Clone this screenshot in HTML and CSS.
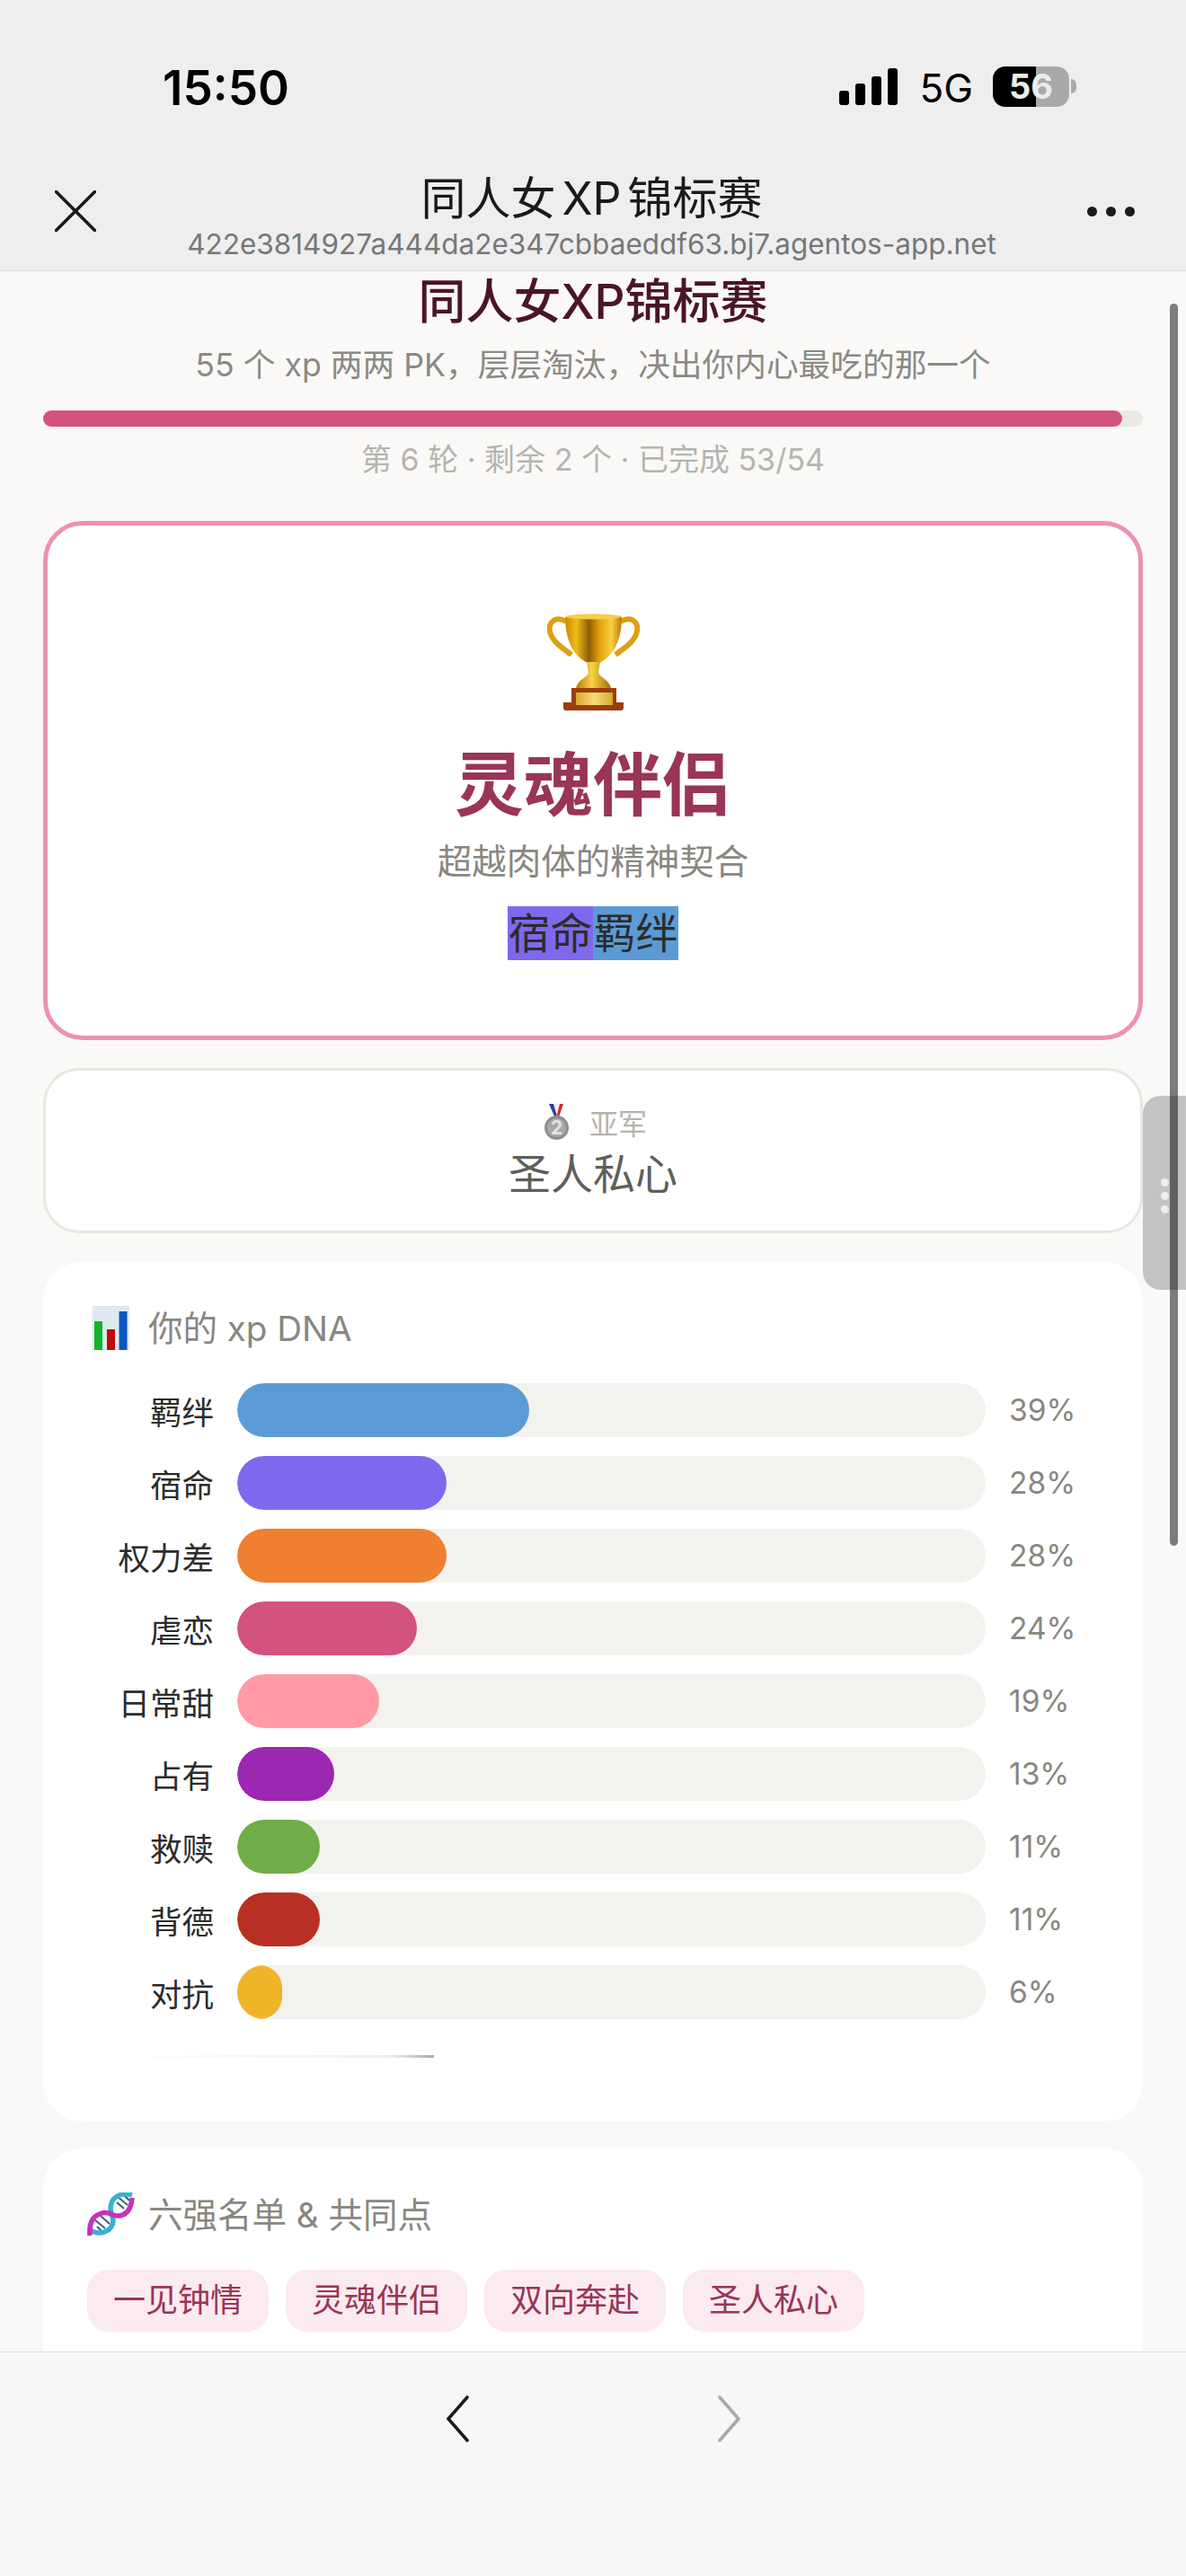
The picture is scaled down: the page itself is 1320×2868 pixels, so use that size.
FILE: index.html
```html
<!DOCTYPE html>
<html lang="zh-CN">
<head>
    <meta charset="UTF-8">
    <meta name="viewport" content="width=device-width, initial-scale=1.0">
    <title>同人女 XP 锦标赛</title>
    <link rel="stylesheet" href="styles.css">
</head>
<body>
    <div class="phone">
        <header class="topbar">
            <div class="status">
                <span class="time">15:50</span>
                <div class="status-right">
                    <div class="signal"><i class="s1"></i><i class="s2"></i><i class="s3"></i><i class="s4"></i></div>
                    <span class="net">5G</span>
                    <div class="battery"><span>56</span></div>
                    <div class="battery-tip"></div>
                </div>
            </div>
            <div class="webbar">
                <svg class="close-icon" viewBox="0 0 46 46"><path d="M1.5 1.5 44.5 44.5M44.5 1.500 1.500 44.500" stroke="#1a1a1a" stroke-width="3.600" stroke-linecap="round" fill="none"/></svg>
                <div class="webtitle">
                    <div class="webname">同人女 XP 锦标赛</div>
                    <div class="weburl">422e3814927a444da2e347cbbaeddf63.bj7.agentos-app.net</div>
                </div>
                <div class="more"><i></i><i></i><i></i></div>
            </div>
        </header>

        <main class="content">
            <h1>同人女XP锦标赛</h1>
            <p class="intro">55 个 xp 两两 PK，层层淘汰，决出你内心最吃的那一个</p>
            <div class="progress"><div class="progress-fill"></div></div>
            <p class="round">第 6 轮 · 剩余 2 个 · 已完成 53/54</p>

            <section class="champion">
                <svg class="trophy" viewBox="0 0 103 108">
                    <defs>
                        <linearGradient id="cup" x1="0" x2="1" y1="0" y2="0">
                            <stop offset="0" stop-color="#c98a08"/>
                            <stop offset=".2" stop-color="#f0bd18"/>
                            <stop offset=".42" stop-color="#8f5e08"/>
                            <stop offset=".6" stop-color="#e0a00c"/>
                            <stop offset=".82" stop-color="#f8d040"/>
                            <stop offset="1" stop-color="#b87a08"/>
                        </linearGradient>
                        <linearGradient id="foot" x1="0" x2="1" y1="0" y2="0">
                            <stop offset="0" stop-color="#b87a08"/>
                            <stop offset=".45" stop-color="#f8d448"/>
                            <stop offset="1" stop-color="#a86c08"/>
                        </linearGradient>
                        <linearGradient id="plate" x1="0" x2="1" y1="0" y2="0">
                            <stop offset="0" stop-color="#d9a82e"/>
                            <stop offset=".5" stop-color="#f7dc7c"/>
                            <stop offset="1" stop-color="#d9a82e"/>
                        </linearGradient>
                    </defs>
                    <path d="M21 9C9 2 1 10 3 20 5 31 18 39 27 46M82 9C94 2 102 10 100 20 98 31 85 39 76 46" fill="none" stroke="#dca014" stroke-width="6"/>
                    <path d="M20 4C30 0 73 0 83 4 83 29 74 48 58 55H45C29 48 20 29 20 4Z" fill="url(#cup)"/>
                    <ellipse cx="51.500" cy="3.500" rx="31" ry="3" fill="#f6cf48"/>
                    <path d="M44 54H59L57 66C59 72 70 74 71 84H32C33 74 44 72 46 66Z" fill="url(#foot)"/>
                    <path d="M27 83H77V99H85V105Q85 108 82 108H21Q18 108 18 105V99H27Z" fill="#9c3d0c"/>
                    <rect x="32" y="88" width="41" height="14" fill="url(#plate)"/>
                </svg>
                <div class="champ-name">灵魂伴侣</div>
                <div class="champ-desc">超越肉体的精神契合</div>
                <div class="champ-tags"><span class="tag-purple">宿命</span><span class="tag-blue">羁绊</span></div>
            </section>

            <section class="runner">
                <div class="runner-label">
                    <svg class="medal" viewBox="0 0 29 40">
                        <path d="M6 0H22L16.500 16H12.500Z" fill="#eee"/>
                        <path d="M6 0H11L15 14 13 16Z" fill="#2f3f9e"/>
                        <path d="M22 0H18L15 12 16.500 16Z" fill="#c92b36"/>
                        <circle cx="14.500" cy="26.500" r="13.500" fill="#8e8e90"/>
                        <circle cx="14.500" cy="26.500" r="10.500" fill="#a9a9ab"/>
                        <text x="14.500" y="34" text-anchor="middle" class="medal-num">2</text>
                    </svg>
                    <span>亚军</span>
                </div>
                <div class="runner-name">圣人私心</div>
            </section>

            <section class="card dna-card">
                <div class="card-head">
                    <svg class="head-icon" viewBox="0 0 54 49">
                        <defs>
                            <pattern id="grid" width="3" height="3" patternUnits="userSpaceOnUse">
                                <path d="M3 0H0V3" fill="none" stroke="#c6d6e6" stroke-width=".6"/>
                            </pattern>
                        </defs>
                        <rect x="6" y="0" width="41" height="49" fill="#e4edf5"/>
                        <rect x="6" y="0" width="41" height="49" fill="url(#grid)"/>
                        <rect x="8" y="17" width="9" height="32" fill="#0fb52a"/>
                        <rect x="22" y="26" width="9" height="23" fill="#c00b0b"/>
                        <rect x="35.500" y="6" width="9" height="43" fill="#0c57c0"/>
                    </svg>
                    <span>你的 xp DNA</span>
                </div>
                <div class="bars">
                    <div class="bar-label">羁绊</div><div class="track"><div class="fill" style="width:39%;background:#5b9bd5"></div></div><div class="pct">39%</div>
                    <div class="bar-label">宿命</div><div class="track"><div class="fill" style="width:28%;background:#7f68ed"></div></div><div class="pct">28%</div>
                    <div class="bar-label">权力差</div><div class="track"><div class="fill" style="width:28%;background:#f07f30"></div></div><div class="pct">28%</div>
                    <div class="bar-label">虐恋</div><div class="track"><div class="fill" style="width:24%;background:#d4527e"></div></div><div class="pct">24%</div>
                    <div class="bar-label">日常甜</div><div class="track"><div class="fill" style="width:19%;background:#ff9aa6"></div></div><div class="pct">19%</div>
                    <div class="bar-label">占有</div><div class="track"><div class="fill" style="width:13%;background:#9c27b0"></div></div><div class="pct">13%</div>
                    <div class="bar-label">救赎</div><div class="track"><div class="fill" style="width:11%;background:#70ad47"></div></div><div class="pct">11%</div>
                    <div class="bar-label">背德</div><div class="track"><div class="fill" style="width:11%;background:#b83024"></div></div><div class="pct">11%</div>
                    <div class="bar-label">对抗</div><div class="track"><div class="fill" style="width:6%;background:#f0b429"></div></div><div class="pct">6%</div>
                </div>
                <div class="fade-line"></div>
            </section>

            <section class="card list-card">
                <div class="card-head">
                    <svg class="head-icon" viewBox="0 0 54 49">
                        <path d="M11 38 17 44M8 30 20 40M15 26 25 35M33 11 41 18M33 4 45 14M41 3 47 9" stroke="#46607e" stroke-width="2.200"/>
                        <path d="M50 3C40 0 30 3 27 12 25 18 26 22 28 27 31 35 26 44 14 45 10 45 6 44 3 41" fill="none" stroke="#35b3cf" stroke-width="5.500"/>
                        <path d="M3 48C2 36 5 27 14 24 20 21 25 23 29 25 37 28 44 24 47 18 49 14 50 10 50 6" fill="none" stroke="#c433bd" stroke-width="5.500"/>
                    </svg>
                    <span>六强名单 &amp; 共同点</span>
                </div>
                <div class="chips">
                    <span class="chip">一见钟情</span>
                    <span class="chip">灵魂伴侣</span>
                    <span class="chip">双向奔赴</span>
                    <span class="chip">圣人私心</span>
                </div>
            </section>
        </main>

        <footer class="bottombar">
            <svg class="chev" viewBox="0 0 26 52"><path d="M24 2 3 26 24 50" fill="none" stroke="#1a1a1a" stroke-width="3.600" stroke-linecap="round" stroke-linejoin="round"/></svg>
            <svg class="chev" viewBox="0 0 26 52"><path d="M2 2 23 26 2 50" fill="none" stroke="#a9a9a9" stroke-width="3.600" stroke-linecap="round" stroke-linejoin="round"/></svg>
        </footer>

        <div class="side-handle"><i></i><i></i><i></i></div>
        <div class="scrollbar"></div>
    </div>
</body>
</html>
```

FILE: styles.css
```css
* {
    box-sizing: border-box;
}
body {
    margin: 0;
    background-color: #faf9f7;
    font-family: Inter, "Noto Sans CJK SC", sans-serif;
}
.phone {
    position: relative;
    width: 1320px;
    height: 2868px;
    display: flex;
    flex-direction: column;
    overflow: hidden;
}

/* top bar */
.topbar {
    height: 302px;
    flex-shrink: 0;
    background-color: #eeeeef;
    border-bottom: 1px solid #dedede;
}
.status {
    height: 190px;
    padding: 68px 122px 0 181px;
    display: flex;
    justify-content: space-between;
}
.time {
    font-size: 53px;
    line-height: 60px;
    font-weight: 600;
    color: #000;
}
.status-right {
    height: 46px;
    margin-top: 5px;
    display: flex;
    align-items: center;
}
.signal {
    display: flex;
    align-items: flex-end;
    gap: 7px;
    height: 41px;
    margin-right: 24px;
}
.signal i {
    width: 11px;
    border-radius: 3px;
    background-color: #000;
}
.s1 { height: 16px; }
.s2 { height: 24px; }
.s3 { height: 32px; }
.s4 { height: 41px; }
.net {
    font-size: 44px;
    line-height: 46px;
    color: #000;
    margin: 3px 22px 0 0;
}
.battery {
    width: 85px;
    height: 45px;
    border-radius: 14px;
    background: linear-gradient(to right, #000 48px, #a9a9a9 48px);
    color: #ececec;
    font-size: 38px;
    font-weight: 700;
    line-height: 45px;
    text-align: center;
}
.battery-tip {
    width: 6px;
    height: 16px;
    margin-left: 2px;
    border-radius: 0 8px 8px 0;
    background-color: #a9a9a9;
}
.webbar {
    height: 111px;
    padding: 0 57px 0 61px;
    display: flex;
    justify-content: space-between;
}
.close-icon {
    width: 46px;
    height: 46px;
    margin-top: 22px;
}
.webtitle {
    text-align: center;
    margin-top: -2px;
}
.webname {
    font-size: 50px;
    line-height: 66px;
    word-spacing: -7px;
    color: #1a1a1a;
}
.weburl {
    font-size: 31.500px;
    line-height: 36px;
    color: #777;
}
.more {
    display: flex;
    gap: 10px;
    margin-top: 40px;
}
.more i {
    width: 11px;
    height: 11px;
    border-radius: 50%;
    background-color: #1a1a1a;
}

/* scroll content */
.content {
    flex: 1;
    min-height: 0;
    overflow: hidden;
    padding: 0 48px;
    background-color: #faf9f7;
}
h1 {
    margin: 0;
    font-size: 53px;
    line-height: 68px;
    font-weight: 500;
    color: #4a1528;
    text-align: center;
}
.intro {
    margin: 12px 0 0;
    font-size: 35.700px;
    line-height: 48px;
    color: #8a8a85;
    text-align: center;
}
.progress {
    height: 18px;
    margin-top: 27px;
    border-radius: 9px;
    background-color: #ebe9e5;
}
.progress-fill {
    width: 98.100%;
    height: 100%;
    border-radius: 9px;
    background-color: #d4527e;
}
.round {
    margin: 15px 0 0;
    font-size: 34px;
    line-height: 44px;
    color: #b5b5b0;
    text-align: center;
}

/* champion */
.champion {
    height: 578px;
    margin-top: 46px;
    padding-top: 98px;
    border: 5px solid #ee90b4;
    border-radius: 44px;
    background-color: #fff;
    text-align: center;
}
.trophy {
    display: block;
    width: 103px;
    height: 108px;
    margin: 0 auto;
}
.champ-name {
    margin-top: 33px;
    font-size: 77px;
    line-height: 100px;
    font-weight: 700;
    color: #993556;
}
.champ-desc {
    margin-top: 9px;
    font-size: 38.500px;
    line-height: 52px;
    color: #888780;
}
.champ-tags {
    display: flex;
    justify-content: center;
    margin-top: 24px;
}
.champ-tags span {
    width: 95px;
    height: 60px;
    font-size: 47px;
    line-height: 60px;
    color: #2c2c2a;
}
.tag-purple { background-color: #7f68ed; }
.tag-blue { background-color: #5b9bd5; }

/* runner up */
.runner {
    height: 184px;
    margin-top: 31px;
    padding-top: 37px;
    border: 3px solid #e8e6e0;
    border-radius: 40px;
    background-color: #fff;
    text-align: center;
}
.runner-label {
    display: flex;
    justify-content: center;
    align-items: center;
    gap: 22px;
    height: 40px;
    padding-left: 5px;
    font-size: 32px;
    color: #b4b4ae;
}
.medal {
    width: 29px;
    height: 40px;
}
.medal-num {
    font-size: 21px;
    font-weight: 700;
    fill: #e4e4e4;
}
.runner-name {
    margin-top: 8px;
    font-size: 47px;
    line-height: 60px;
    color: #5f5f5a;
}

/* white cards */
.card {
    margin-top: 30px;
    padding: 49px 49px 0;
    border-radius: 44px;
    background-color: #fff;
}
.dna-card {
    margin-top: 32px;
    padding-bottom: 71px;
}
.list-card {
    padding-bottom: 60px;
}
.card-head {
    display: flex;
    align-items: center;
    gap: 14px;
    height: 49px;
    font-size: 38.500px;
    color: #888780;
}
.card-head span {
    padding-bottom: 5px;
}
.head-icon {
    width: 54px;
    height: 49px;
}
.bars {
    display: grid;
    grid-template-columns: 141px 833px 1fr;
    column-gap: 26px;
    row-gap: 21px;
    align-items: center;
    margin-top: 37px;
}
.bar-label {
    font-size: 35.500px;
    text-align: right;
    color: #2c2c2a;
}
.track {
    height: 60px;
    border-radius: 30px;
    background-color: #f3f2ee;
    overflow: hidden;
}
.fill {
    height: 100%;
    border-radius: 30px;
}
.pct {
    font-size: 33.500px;
    color: #888780;
}
.fade-line {
    width: 380px;
    height: 3px;
    margin: 40px 0 0 6px;
    background: linear-gradient(to right, rgba(240,240,240,0), #f4f4f4 70%, #ececec 88%, #aaa);
}
.chips {
    display: flex;
    gap: 19px;
    margin-top: 37px;
}
.chip {
    width: 202px;
    height: 69px;
    border-radius: 24px;
    background-color: #fbeaf0;
    color: #993556;
    font-size: 36px;
    line-height: 69px;
    text-align: center;
}

/* bottom nav */
.bottombar {
    height: 250px;
    flex-shrink: 0;
    padding-top: 48px;
    display: flex;
    justify-content: center;
    gap: 277px;
    background-color: #f7f7f7;
    border-top: 1px solid #dedede;
}
.chev {
    width: 26px;
    height: 52px;
}

/* overlays */
.side-handle {
    position: absolute;
    top: 1220px;
    right: 0;
    width: 48px;
    height: 216px;
    padding: 92px 0 0 20px;
    border-radius: 20px 0 0 20px;
    background-color: #c3c3c3;
}
.side-handle i {
    display: block;
    width: 9px;
    height: 9px;
    margin-bottom: 6px;
    border-radius: 50%;
    background-color: #eee;
}
.scrollbar {
    position: absolute;
    top: 338px;
    left: 1302px;
    width: 9px;
    height: 1383px;
    border-radius: 5px;
    background-color: rgba(0, 0, 0, .5);
}
```
